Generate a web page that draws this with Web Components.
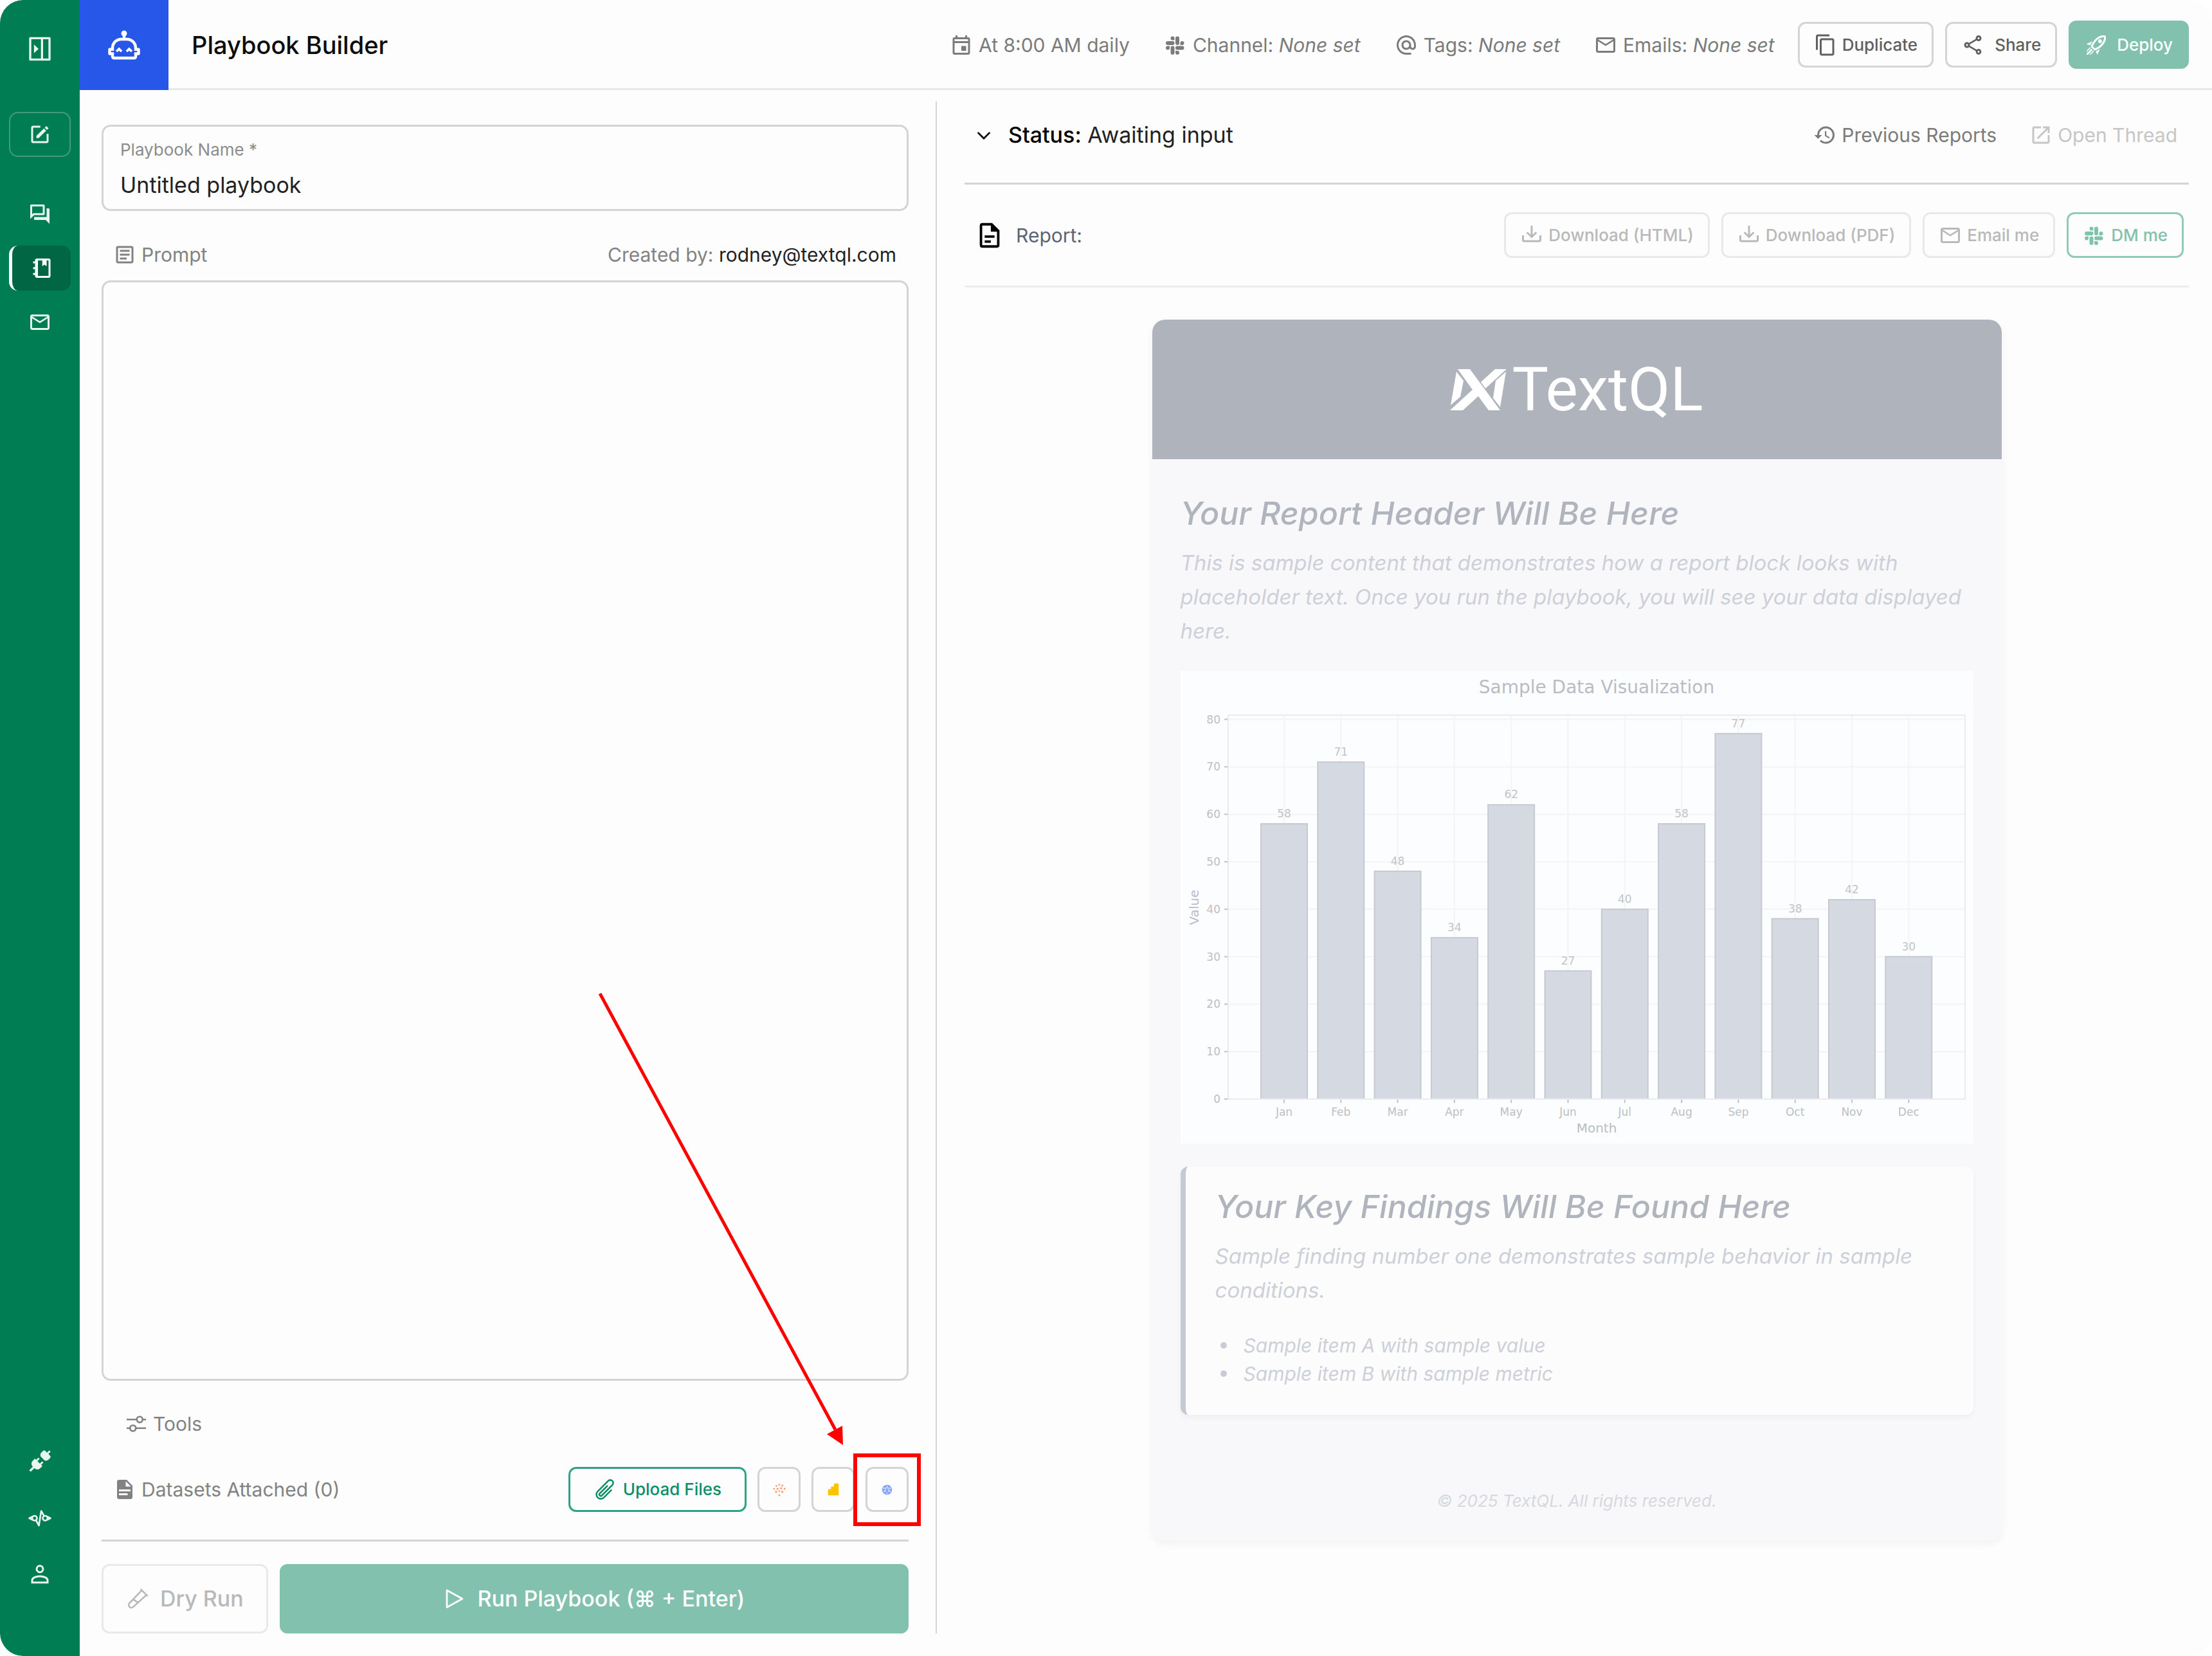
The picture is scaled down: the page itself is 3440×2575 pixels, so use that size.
<!DOCTYPE html>
<html lang="en">
<head>
<meta charset="utf-8">
<title>Playbook Builder</title>
<style>
html { background: #fff; }
body { margin: 0; font-family: Inter, "Noto Sans", sans-serif; font-size: 30px; color: #111; }
</style>
</head>
<body>
<playbook-app></playbook-app>
<script>
const ICONS = {
  calendar: '<path d="M19,4H18V2H16V4H8V2H6V4H5A2,2 0 0 0 3,6V20A2,2 0 0 0 5,22H19A2,2 0 0 0 21,20V6A2,2 0 0 0 19,4M19,20H5V10H19V20M19,8H5V6H19V8M12,13H17V18H12V13Z"/>',
  slack: '<path d="M6,15A2,2 0 0,1 4,17A2,2 0 0,1 2,15A2,2 0 0,1 4,13H6V15M7,15A2,2 0 0,1 9,13A2,2 0 0,1 11,15V20A2,2 0 0,1 9,22A2,2 0 0,1 7,20V15M9,7A2,2 0 0,1 7,5A2,2 0 0,1 9,3A2,2 0 0,1 11,5V7H9M9,8A2,2 0 0,1 11,10A2,2 0 0,1 9,12H4A2,2 0 0,1 2,10A2,2 0 0,1 4,8H9M17,10A2,2 0 0,1 19,8A2,2 0 0,1 21,10A2,2 0 0,1 19,12H17V10M16,10A2,2 0 0,1 14,12A2,2 0 0,1 12,10V5A2,2 0 0,1 14,3A2,2 0 0,1 16,5V10M14,18A2,2 0 0,1 16,20A2,2 0 0,1 14,22A2,2 0 0,1 12,20V18H14M14,17A2,2 0 0,1 12,15A2,2 0 0,1 14,13H19A2,2 0 0,1 21,15A2,2 0 0,1 19,17H14Z"/>',
  at: '<path d="M12 2C6.48 2 2 6.48 2 12s4.48 10 10 10h5v-2h-5c-4.34 0-8-3.66-8-8s3.66-8 8-8 8 3.66 8 8v1.43c0 .79-.71 1.57-1.5 1.57s-1.5-.78-1.5-1.57V12c0-2.76-2.24-5-5-5s-5 2.24-5 5 2.24 5 5 5c1.38 0 2.64-.56 3.54-1.47.65.89 1.77 1.47 2.96 1.47 1.97 0 3.5-1.6 3.5-3.57V12c0-5.52-4.48-10-10-10zm0 13c-1.66 0-3-1.34-3-3s1.34-3 3-3 3 1.34 3 3-1.34 3-3 3z"/>',
  mail: '<path d="M22 6c0-1.1-.9-2-2-2H4c-1.1 0-2 .9-2 2v12c0 1.1.9 2 2 2h16c1.1 0 2-.9 2-2V6zm-2 0-8 5-8-5h16zm0 12H4V8l8 5 8-5v10z"/>',
  copy: '<path d="M16 1H4c-1.1 0-2 .9-2 2v14h2V3h12V1zm3 4H8c-1.1 0-2 .9-2 2v14c0 1.1.9 2 2 2h11c1.1 0 2-.9 2-2V7c0-1.1-.9-2-2-2zm0 16H8V7h11v14z"/>',
  share: '<path d="M18 16.08c-.76 0-1.44.3-1.96.77L8.91 12.7c.05-.23.09-.46.09-.7s-.04-.47-.09-.7l7.05-4.11c.54.5 1.25.81 2.04.81 1.66 0 3-1.34 3-3s-1.34-3-3-3-3 1.34-3 3c0 .24.04.47.09.7L8.04 9.81C7.5 9.31 6.79 9 6 9c-1.66 0-3 1.34-3 3s1.34 3 3 3c.79 0 1.5-.31 2.04-.81l7.12 4.16c-.05.21-.08.43-.08.65 0 1.61 1.31 2.92 2.92 2.92s2.92-1.31 2.92-2.92-1.31-2.92-2.92-2.92zM18 4c.55 0 1 .45 1 1s-.45 1-1 1-1-.45-1-1 .45-1 1-1zM6 13c-.55 0-1-.45-1-1s.45-1 1-1 1 .45 1 1-.45 1-1 1zm12 7.02c-.55 0-1-.45-1-1s.45-1 1-1 1 .45 1 1-.45 1-1 1z"/>',
  rocket: '<path d="M13.13 22.19L11.5 18.36C13.07 17.78 14.54 17 15.9 16.09L13.13 22.19M5.64 12.5L1.81 10.87L7.91 8.1C7 9.46 6.22 10.93 5.64 12.5M19.22 4C19.5 4 19.75 4 19.96 4.05C20.13 5.44 19.94 8.3 16.66 11.58C14.96 13.29 12.93 14.6 10.65 15.47L8.5 13.37C9.42 11.06 10.73 9.03 12.42 7.34C15.18 4.58 17.64 4 19.22 4M19.22 2C17.24 2 14.24 2.69 11 5.93C8.81 8.12 7.5 10.53 6.65 12.64C6.37 13.39 6.56 14.21 7.11 14.77L9.24 16.89C9.62 17.27 10.13 17.5 10.66 17.5C10.89 17.5 11.13 17.44 11.36 17.35C13.5 16.53 15.88 15.19 18.07 13C23.73 7.34 21.61 2.39 21.61 2.39S20.7 2 19.22 2M14.54 9.46C13.76 8.68 13.76 7.41 14.54 6.63S16.59 5.85 17.37 6.63C18.14 7.41 18.15 8.68 17.37 9.46C16.59 10.24 15.32 10.24 14.54 9.46M6.24 22L9.88 18.36C9.54 18.27 9.21 18.12 8.91 17.91L4.83 22H6.24M2 22H3.41L8.18 17.24L6.76 15.83L2 20.59V22M2 19.17L6.09 15.09C5.88 14.79 5.73 14.47 5.64 14.12L2 17.76V19.17Z"/>',
  history: '<path d="M13.5,8H12V13L16.28,15.54L17,14.33L13.5,12.25V8M13,3A9,9 0 0,0 4,12H1L4.96,16.03L9,12H6A7,7 0 0,1 13,5A7,7 0 0,1 20,12A7,7 0 0,1 13,19C11.07,19 9.32,18.21 8.06,16.94L6.64,18.36C8.27,20 10.5,21 13,21A9,9 0 0,0 22,12A9,9 0 0,0 13,3"/>',
  open: '<path d="M19 19H5V5h7V3H5c-1.11 0-2 .9-2 2v14c0 1.1.89 2 2 2h14c1.1 0 2-.9 2-2v-7h-2v7zM14 3v2h3.59l-9.83 9.83 1.41 1.41L19 6.41V10h2V3h-7z"/>',
  chevron: '<path d="M6.4 8.6 12 14.2l5.6-5.6 1.3 1.3L12 16.8 5.1 9.9z"/>',
  doc: '<path d="M6,2A2,2 0 0,0 4,4V20A2,2 0 0,0 6,22H18A2,2 0 0,0 20,20V8L14,2H6M6,4H13V9H18V20H6V4M8,12V14H16V12H8M8,16V18H13V16H8Z"/>',
  docfill: '<path d="M13,9H18.5L13,3.5V9M6,2H14L20,8V20A2,2 0 0,1 18,22H6C4.89,22 4,21.1 4,20V4C4,2.89 4.89,2 6,2M15,18V16H6V18H15M18,14V12H6V14H18Z"/>',
  download: '<path d="M2 12H4V17H20V12H22V17C22 18.11 21.11 19 20 19H4C2.9 19 2 18.11 2 17V12M12 15L17.55 9.54L16.13 8.13L13 11.25V2H11V11.25L7.88 8.13L6.46 9.55L12 15Z"/>',
  prompt: '<path d="M5,3C3.89,3 3,3.89 3,5V19C3,20.11 3.89,21 5,21H19C20.11,21 21,20.11 21,19V5C21,3.89 20.11,3 19,3H5M5,5H19V19H5V5M7,7V9H17V7H7M7,11V13H17V11H7M7,15V17H14V15H7Z"/>',
  tools: '<g fill="none" stroke="currentColor" stroke-width="1.8"><path d="M2 7.5h10.5M18.500 7.500H22M2 16.500h3.500M11.500 16.500H22"/><circle cx="15.500" cy="7.500" r="3"/><circle cx="8.500" cy="16.500" r="3"/></g>',
  clip: '<path fill="none" stroke="currentColor" stroke-width="1.7" stroke-linecap="round" stroke-linejoin="round" d="m18.375 12.739-7.693 7.693a4.500 4.500 0 0 1-6.364-6.364l10.940-10.940A3 3 0 1 1 19.500 7.372L8.552 18.320m5.698-9.951-7.810 7.810a1.500 1.500 0 0 0 2.112 2.130"/>',
  play: '<path fill="none" stroke="currentColor" stroke-width="1.8" stroke-linejoin="round" d="M4 3.200v17.600L20 12z"/>',
  tube: '<g fill="none" stroke="currentColor" stroke-width="1.7" stroke-linejoin="round"><path d="M16.300 3.200 3.600 16.500a2.700 2.700 0 0 0 3.900 3.900L21 8.200M15 2l7.500 7.200M7.400 12.600l5 3.300"/></g>',
  panel: '<path fill-rule="evenodd" d="M3 1h18a1 1 0 0 1 1 1v20a1 1 0 0 1-1 1H3a1 1 0 0 1-1-1V2a1 1 0 0 1 1-1zM4 3v18h9V3zm11 0v18h5V3zM6.500 8v8l4.300-4z"/>',
  compose: '<path fill-rule="evenodd" d="M5 3h7.500v2H5v14h14v-7.500h2V19a2 2 0 0 1-2 2H5a2 2 0 0 1-2-2V5a2 2 0 0 1 2-2z"/><path d="M18.700 3.300 21 5.600l-1.700 1.700L17 5zM16.200 5.800l2.300 2.300-7.800 7.700H8.400v-2.300z"/>',
  chat: '<path d="M15,4V11H5.17L4,12.17V4H15M16,2H3A1,1 0 0,0 2,3V17L6,13H16A1,1 0 0,0 17,12V3A1,1 0 0,0 16,2M21,6H19V15H6V17A1,1 0 0,0 7,18H18L22,22V7A1,1 0 0,0 21,6Z"/>',
  notebook: '<path fill-rule="evenodd" d="M5 4v1H3v2h2v4H3v2h2v4H3v2h2v1a2 2 0 0 0 2 2h12a2 2 0 0 0 2-2V4a2 2 0 0 0-2-2H7a2 2 0 0 0-2 2zM8 4h4.500v6l2.250-1.700L17 10V4h2v16H8z"/>',
  robot: '<path d="M22 14H21C21 10.13 17.87 7 14 7H13V5.73C13.6 5.39 14 4.74 14 4C14 2.9 13.11 2 12 2S10 2.9 10 4C10 4.74 10.4 5.39 11 5.73V7H10C6.13 7 3 10.13 3 14H2C1.45 14 1 14.45 1 15V18C1 18.55 1.45 19 2 19H3V20C3 21.11 3.9 22 5 22H19C20.11 22 21 21.11 21 20V19H22C22.55 19 23 18.55 23 18V15C23 14.45 22.55 14 22 14M21 17H19V20H5V17H3V16H5V14C5 11.24 7.24 9 10 9H14C16.76 9 19 11.24 19 14V16H21V17M8.500 13.500L10.860 15.860L9.680 17.040L8.500 15.860L7.320 17.040L6.140 15.860L8.500 13.500M15.500 13.500L17.860 15.860L16.680 17.040L15.500 15.860L14.320 17.040L13.140 15.860L15.500 13.500Z"/>',
  plugs: '<g transform="rotate(45 12 12)"><path d="M11 -2.800h2V.500h2.200a2 2 0 0 1 2 2v2.200c0 1.600-1 2.500-2.200 3.300H9c-1.200-.8-2.200-1.700-2.200-3.300V2.500a2 2 0 0 1 2-2H11z"/><path d="M8.300 10.500h1.900v3.300h3.600v-3.300h1.900v3.300h1.800v3.400a4 4 0 0 1-4 4h-.4v5.300h-2.200v-5.300h-.4a4 4 0 0 1-4-4v-3.400h1.800z"/></g>',
  code: '<g fill="none" stroke="currentColor" stroke-width="1.800" stroke-linejoin="round"><circle cx="6.500" cy="12.500" r="2.500"/><circle cx="17.500" cy="12.500" r="2.500"/><path d="M4.500 10.800 1 12.500l3.500 1.700M19.500 10.800 23 12.500l-3.500 1.700M8 14.600l3 5.400L13.400 5l3 5.300"/></g>',
  user: '<g fill="none" stroke="currentColor" stroke-width="2"><circle cx="12" cy="6.500" r="3.300"/><path d="M4 20.500v-2.300c0-2.600 4.200-4.200 8-4.200s8 1.600 8 4.200v2.300z"/></g>',
  spark: '<g fill="#ff9a70"><circle cx="7" cy="6" r="1.500"/><circle cx="12" cy="4" r="1.500"/><circle cx="17" cy="5.500" r="1.700"/><circle cx="3" cy="11" r="1.500"/><circle cx="9" cy="11" r="1.800"/><circle cx="15" cy="10" r="1.700"/><circle cx="21" cy="11" r="1.600"/><circle cx="6.500" cy="16" r="1.700"/><circle cx="12" cy="15" r="1.400"/><circle cx="17" cy="16" r="1.700"/><circle cx="12" cy="22" r="1.500"/></g>',
  bars: '<path fill="#fac400" d="M3 22v-9a1.500 1.500 0 0 1 1.500-1.500H8V8.500A1.500 1.500 0 0 1 9.500 7H13V3.500A1.500 1.500 0 0 1 14.500 2h5A1.500 1.500 0 0 1 21 3.500V22z"/>',
  globe: '<circle cx="12" cy="12" r="11" fill="#86a5f7"/><path fill="none" stroke="#fff" stroke-width="1.500" d="M3 8.500h8M13 8.500h8M4 15.500h6M14 15.500h6M12 3v5M9 11l-2 3M15 11l2 3M12 18v3"/>'
};

function define(name, css, html, after) {
  const template = document.createElement('template');
  template.innerHTML = `<style>*{box-sizing:border-box}:host{display:block;box-sizing:border-box}${css}</style>${html}`;
  customElements.define(name, class extends HTMLElement {
    constructor() {
      super();
      this.attachShadow({ mode: 'open' }).append(template.content.cloneNode(true));
    }
    connectedCallback() { if (after) after(this, this.shadowRoot); }
  });
}

define('app-icon', `
  :host { display: inline-block; flex: none; width: var(--size, 36px); height: var(--size, 36px); }
  svg { display: block; width: 100%; height: 100%; overflow: visible; }`,
  `<svg viewBox="0 0 24 24" fill="currentColor" aria-hidden="true"></svg>`,
  (el, root) => { root.querySelector('svg').innerHTML = ICONS[el.getAttribute('name')] || ''; });

define('ui-button', `
  :host { display: inline-flex; }
  button { flex: 1; display: flex; align-items: center; justify-content: center; gap: var(--gap, 8px);
    height: var(--h, 71px); padding: 0 var(--pad, 22px); margin: 0; border: 3px solid var(--line, #d4d4d4);
    border-radius: 12px; background: var(--fill, transparent); color: var(--ink, #606060);
    font: 500 var(--fs, 26px)/1.2 Inter, sans-serif; white-space: nowrap; }
  :host([tone=quiet]) { --line: #e9e9e9; --ink: #b9b9b9; }
  :host([tone=outline]) { --line: #2da284; --ink: #0a8f6a; }
  :host([tone=soft]) { --line: #92cab7; --ink: #80c2ab; }
  :host([tone=solid]) { --line: #82c1ad; --fill: #82c1ad; --ink: #fff; }`,
  `<button type="button"><slot></slot></button>`,
  (el, root) => {
    const b = root.querySelector('button');
    if (el.hasAttribute('disabled')) b.disabled = true;
    if (el.hasAttribute('label')) b.setAttribute('aria-label', el.getAttribute('label'));
  });

define('nav-item', `
  a { display: flex; align-items: center; justify-content: center; width: 96px; height: 70px;
    border-radius: 14px; color: #e9f5ef; }
  :host([boxed]) a { border: 2px solid #459a7c; }
  :host([active]) a { background: #006643; border-left: 5px solid #fff; color: #fff; }`,
  `<a href="#"></a>`,
  (el, root) => {
    const icon = document.createElement('app-icon');
    const link = root.querySelector('a');
    icon.setAttribute('name', el.getAttribute('icon'));
    link.replaceChildren(icon);
    link.setAttribute('aria-label', el.getAttribute('label'));
  });

define('side-nav', `
  :host { flex: none; width: 124px; background: #007d52; padding: 41px 14px 92px; display: flex;
    flex-direction: column; justify-content: space-between; }
  nav { display: flex; flex-direction: column; }
  .top { gap: 14px; }
  .toggle { --size: 40px; padding-bottom: 49px; }
  .new { padding-bottom: 40px; }
  .bottom { gap: 18px; }`,
  `<nav class="top" aria-label="Main">
    <nav-item class="toggle" icon="panel" label="Expand"></nav-item>
    <nav-item class="new" boxed icon="compose" label="New"></nav-item>
    <nav-item icon="chat" label="Threads"></nav-item>
    <nav-item active icon="notebook" label="Playbooks"></nav-item>
    <nav-item icon="mail" label="Inbox"></nav-item>
  </nav>
  <nav class="bottom" aria-label="Account">
    <nav-item icon="plugs" label="Connectors"></nav-item>
    <nav-item icon="code" label="Developers"></nav-item>
    <nav-item icon="user" label="Profile"></nav-item>
  </nav>`);

define('meta-item', `
  :host { display: flex; align-items: center; gap: 9px; color: #7b7b7b; white-space: nowrap; }`,
  `<slot name="icon"></slot><span><slot></slot></span>`);

define('top-bar', `
  :host { display: flex; height: 140px; }
  .mark { flex: none; width: 138px; display: flex; align-items: center; justify-content: center;
    background: #2657e8; color: #fff; --size: 54px; }
  .bar { flex: 1; display: flex; align-items: center; gap: 18px; padding: 2px 36px 0; border-bottom: 3px solid #e8e8e8; }
  h1 { margin: 0; flex: 1; font-size: 38px; font-weight: 500; line-height: 48px; color: #0c0c0c; white-space: nowrap; }
  .meta { display: flex; gap: 53px; padding-right: 18px; }`,
  `<div class="mark"><app-icon name="robot"></app-icon></div>
  <div class="bar">
    <h1>Playbook Builder</h1>
    <div class="meta">
      <meta-item><app-icon slot="icon" name="calendar"></app-icon>At 8:00 AM daily</meta-item>
      <meta-item><app-icon slot="icon" name="slack"></app-icon>Channel: <i>None set</i></meta-item>
      <meta-item><app-icon slot="icon" name="at"></app-icon>Tags: <i>None set</i></meta-item>
      <meta-item><app-icon slot="icon" name="mail"></app-icon>Emails: <i>None set</i></meta-item>
    </div>
    <ui-button><app-icon name="copy"></app-icon>Duplicate</ui-button>
    <ui-button style="--gap:16px"><app-icon name="share"></app-icon>Share</ui-button>
    <ui-button tone="solid" disabled style="--gap:14px;--h:75px"><app-icon name="rocket"></app-icon>Deploy</ui-button>
  </div>`);

define('guide-mark', `
  :host { display: flex; position: relative; }
  .frame { position: absolute; inset: -21px -19px -22px; border: 6px solid #f00; pointer-events: none; }
  svg { position: absolute; right: 102px; bottom: 104px; width: 380px; height: 704px; pointer-events: none; }`,
  `<slot></slot><div class="frame"></div>
  <svg viewBox="0 0 380 704" aria-hidden="true"><path d="M2 2 368 680" stroke="#f00" stroke-width="5" fill="none"/><path d="M355 687 379 674 380 704z" fill="#f00"/></svg>`);

define('playbook-form', `
  :host { display: flex; flex-direction: column; padding: 36px 42px 0 0; border-right: 2px solid #d4d4d4; color: #828282; }
  .field { display: block; border: 3px solid #d4d4d4; border-radius: 14px; padding: 20px 26px 17px; }
  .field span { display: block; font-size: 26px; line-height: 32px; color: #8c8c8c; }
  .field input { display: block; width: 100%; margin: 19px 0 0; padding: 0; border: 0; outline: 0; background: none;
    font: 34px/40px Inter, sans-serif; height: 40px; color: #222; }
  .row { display: flex; align-items: center; line-height: 52px; gap: 8px; }
  .row > .end { margin-left: auto; }
  .prompt { padding: 42px 19px 14px 18px; }
  .prompt label { display: flex; align-items: center; gap: 8px; }
  .prompt b { font-weight: 400; color: #222; }
  textarea { flex: 1; min-height: 400px; width: 100%; display: block; margin: 0; resize: none; outline: 0; padding: 26px;
    border: 3px solid #d4d4d4; border-radius: 14px; background: transparent; font: 34px/48px Inter, sans-serif; }
  .tools { padding: 41px 0 0 36px; }
  .data { padding: 41px 0 43px 18px; border-bottom: 3px solid #d4d4d4; }
  .data .end { display: flex; gap: 17px; align-items: center; }
  .small { --size: 22px; --pad: 0; width: 67px; --h: 70px; }
  .run { display: flex; gap: 18px; padding-top: 35px; --h: 108px; --fs: 34px; --gap: 17px; }
  .run .go { flex: 1; }`,
  `<label class="field"><span>Playbook Name *</span><input type="text" value="Untitled playbook"></label>
  <div class="row prompt"><label for="prompt"><app-icon name="prompt"></app-icon>Prompt</label>
    <span class="end">Created by: <b>rodney@textql.com</b></span></div>
  <textarea id="prompt"></textarea>
  <div class="row tools"><app-icon name="tools"></app-icon><span>Tools</span></div>
  <div class="row data"><app-icon name="docfill"></app-icon><span>Datasets Attached (0)</span>
    <div class="end">
      <ui-button tone="outline" style="--pad:36px;--gap:10px;--h:70px"><app-icon name="clip"></app-icon>Upload Files</ui-button>
      <ui-button class="small" label="Tableau"><app-icon name="spark"></app-icon></ui-button>
      <ui-button class="small" label="Power BI"><app-icon name="bars"></app-icon></ui-button>
      <guide-mark><ui-button class="small" label="Web"><app-icon name="globe" style="--size:17px"></app-icon></ui-button></guide-mark>
    </div></div>
  <div class="run">
    <ui-button tone="quiet" disabled style="--pad:35px"><app-icon name="tube"></app-icon>Dry Run</ui-button>
    <ui-button class="go" tone="solid" disabled><app-icon name="play"></app-icon>Run Playbook (⌘ + Enter)</ui-button>
  </div>`);

define('bar-chart', `
  :host { background: #fcfdfe; font-style: normal; }
  svg { display: block; width: 100%; height: auto; font-family: "DejaVu Sans", sans-serif; }`,
  `<svg viewBox="0 0 1233 735" role="img" aria-label="Sample Data Visualization"></svg>`,
  (el, root) => {
    const data = [['Jan',58],['Feb',71],['Mar',48],['Apr',34],['May',62],['Jun',27],['Jul',40],['Aug',58],['Sep',77],['Oct',38],['Nov',42],['Dec',30]];
    const L = 74, R = 1220, T = 69, B = 666, unit = 7.38, first = 161, step = 88.3, bw = 72;
    let s = '';
    for (let v = 0; v <= 80; v += 10) {
      const y = B - v * unit;
      s += `<path d="M${L} ${y}H${R}" stroke="#f2f4f6" stroke-width="2"/><path d="M${L - 6} ${y}H${L}" stroke="#bfc2c8" stroke-width="2"/>
        <text x="62" y="${y + 6}" text-anchor="end" font-size="17" fill="#bdbfc4">${v}</text>`;
    }
    data.forEach(([m, v], i) => {
      const x = first + i * step, y = B - v * unit;
      s += `<path d="M${x} ${T}V${B}" stroke="#f2f4f6" stroke-width="2"/><path d="M${x} ${B}v6" stroke="#bfc2c8" stroke-width="2"/>
        <rect x="${x - bw / 2}" y="${y}" width="${bw}" height="${B - y}" fill="#d5d9e1" stroke="#c6cacf" stroke-width="2"/>
        <text x="${x}" y="${y - 10}" text-anchor="middle" font-size="17" fill="#c2c4c8">${v}</text>
        <text x="${x}" y="692" text-anchor="middle" font-size="17" fill="#bdbfc4">${m}</text>`;
    });
    s += `<rect x="${L}" y="${T}" width="${R - L}" height="${B - T}" fill="none" stroke="#e9ebee" stroke-width="2"/>
      <text x="647" y="35" text-anchor="middle" font-size="28" fill="#b9bcc4">Sample Data Visualization</text>
      <text x="647" y="718" text-anchor="middle" font-size="20" fill="#b9bcc4">Month</text>
      <text transform="translate(28 368) rotate(-90)" text-anchor="middle" font-size="20" fill="#b9bcc4">Value</text>`;
    root.querySelector('svg').innerHTML = s;
  });

define('report-card', `
  :host { width: 100%; max-width: 1321px; border-radius: 20px; overflow: hidden; background: #f8f8fa; font-style: italic;
    box-shadow: 0 4px 14px rgba(0,0,0,.05); color: #cdd0d8; }
  header { height: 217px; background: #afb3bc; color: #fff; display: flex; align-items: center; justify-content: center; gap: 6px; }
  header svg { width: 90px; height: 66px; }
  header span { font: 400 95px/110px Roboto, sans-serif; }
  .body { padding: 52px 44px 42px; }
  h2 { margin: 0; font-size: 50px; line-height: 64px; font-weight: 500; color: #afb4bd; }
  p { margin: 19px 0 0; font-size: 33px; line-height: 53px; }
  bar-chart { margin: 35px 0 36px; }
  section { background: #fcfcfc; border-left: 8px solid #c5cad3; border-radius: 12px; padding: 30px 46px 42px;
    box-shadow: 0 4px 10px rgba(0,0,0,.04); }
  ul { list-style: none; margin: 37px 0 0; padding: 0 0 0 8px; line-height: 44px; }
  li { display: flex; align-items: center; gap: 26px; }
  li::before { content: ""; width: 10px; height: 10px; border-radius: 50%; background: #c8ccd4; }
  footer { margin-top: 114px; text-align: center; font-size: 26px; line-height: 40px; color: #d5d8de; }`,
  `<header><svg viewBox="0 0 90 66" fill="#fff" aria-hidden="true">
      <path d="M12 1h19l47 64H60L44 43 20 65H0L35 33z"/><path d="M70 1h18L55 31l-7-10z"/>
      <path d="M10 5l11 14-5 25L1 57z"/><path d="M87 5 78 60 67 46l4-27z"/></svg><span>TextQL</span></header>
  <div class="body">
    <h2>Your Report Header Will Be Here</h2>
    <p>This is sample content that demonstrates how a report block looks with placeholder text. Once you run the playbook, you will see your data displayed here.</p>
    <bar-chart></bar-chart>
    <section>
      <h2>Your Key Findings Will Be Found Here</h2>
      <p>Sample finding number one demonstrates sample behavior in sample conditions.</p>
      <ul><li>Sample item A with sample value</li><li>Sample item B with sample metric</li></ul>
    </section>
    <footer>© 2025 TextQL. All rights reserved.</footer>
  </div>`);

define('report-panel', `
  :host { padding-left: 43px; }
  .status { display: flex; align-items: center; height: 129px; padding: 0 18px 22px 12px; border-bottom: 3px solid #d4d4d4; white-space: nowrap; }
  .status app-icon { --size: 36px; }
  h2 { flex: 1; margin: 0 0 0 20px; font-size: 34px; line-height: 44px; font-weight: 400; color: #222; }
  h2 b { font-weight: 500; color: #000; }
  a { display: flex; align-items: center; gap: 8px; color: #7b7b7b; text-decoration: none; margin-left: 51px; }
  a.off { color: #c6c6c6; }
  .report { display: flex; align-items: center; gap: 18px; height: 160px; padding: 0 8px 0 16px; border-bottom: 3px solid #ecedf1; }
  .report > app-icon { --size: 46px; color: #000; }
  h3 { flex: 1; margin: 0; font-size: 30px; line-height: 40px; font-weight: 400; color: #5b6477; }
  .stage { display: flex; justify-content: center; padding-top: 50px; }`,
  `<div class="status"><app-icon name="chevron"></app-icon><h2><b>Status:</b> Awaiting input</h2>
    <a href="#"><app-icon name="history"></app-icon>Previous Reports</a>
    <a class="off" href="#"><app-icon name="open"></app-icon>Open Thread</a></div>
  <div class="report"><app-icon name="doc"></app-icon><h3>Report:</h3>
    <ui-button tone="quiet" disabled><app-icon name="download"></app-icon>Download (HTML)</ui-button>
    <ui-button tone="quiet" disabled><app-icon name="download"></app-icon>Download (PDF)</ui-button>
    <ui-button tone="quiet" disabled><app-icon name="mail"></app-icon>Email me</ui-button>
    <ui-button tone="soft" disabled><app-icon name="slack"></app-icon>DM me</ui-button></div>
  <div class="stage"><report-card></report-card></div>`);

define('playbook-app', `
  :host { display: flex; min-height: 100vh; background: #fdfdfd; border-radius: 36px; overflow: hidden; }
  main { flex: 1; min-width: 0; display: flex; flex-direction: column; }
  .work { flex: 1; display: grid; grid-template-columns: 40.2% minmax(0, 1fr); padding: 18px 0 35px; }
  playbook-form { padding-left: 34px; }
  report-panel { padding-right: 36px; }`,
  `<side-nav></side-nav>
  <main><top-bar></top-bar><div class="work"><playbook-form></playbook-form><report-panel></report-panel></div></main>`);
</script>
</body>
</html>
